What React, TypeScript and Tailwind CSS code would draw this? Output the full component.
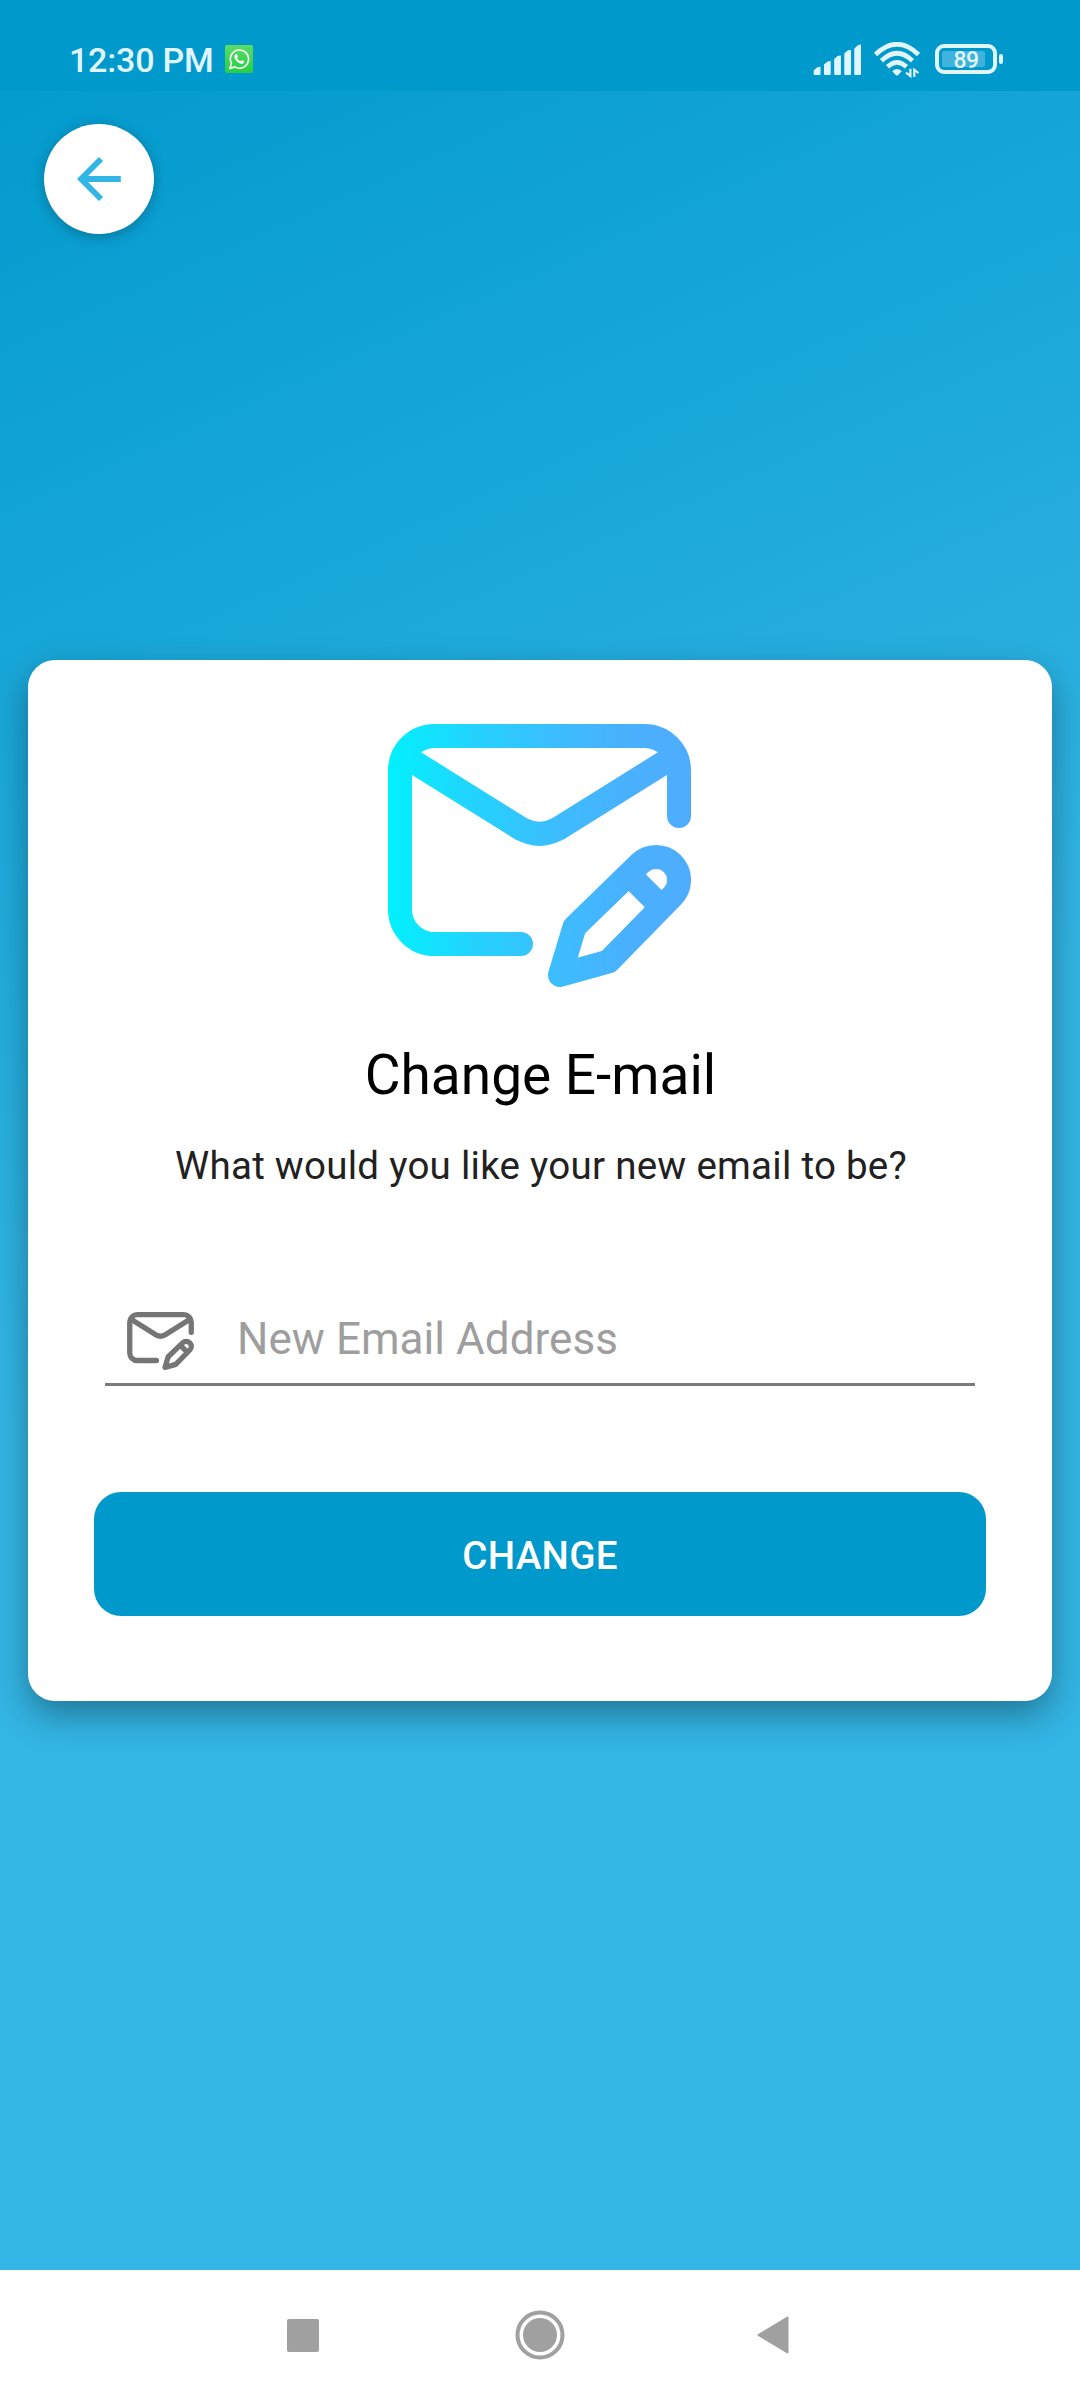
function EnvelopePen({ className, paint }: { className: string; paint: string }) {
  return (
    <svg className={className} viewBox="0 0 303 263" fill="none" stroke={paint} strokeWidth="24" strokeLinecap="round" strokeLinejoin="round">
      <defs>
        <linearGradient id="cyanBlue" gradientUnits="userSpaceOnUse" x1="0" y1="0" x2="303" y2="0">
          <stop offset="0" stopColor="#00f2fe" />
          <stop offset="0.02" stopColor="#03effe" />
          <stop offset="0.29" stopColor="#24d2fe" />
          <stop offset="0.55" stopColor="#3cbdfe" />
          <stop offset="0.8" stopColor="#4ab0fe" />
          <stop offset="1" stopColor="#4facfe" />
        </linearGradient>
      </defs>
      <path d="M133 220H46.500A34.500 34.500 0 0 1 12 185.500V46.500A34.500 34.500 0 0 1 46.500 12H256.500A34.500 34.500 0 0 1 291 46.500V92" />
      <path d="M18 33L133.700 105.200Q151.500 114.500 169.300 105.200L285 33" strokeLinecap="butt" />
      <path d="M172 251L186.500 203L251.700 139.700A23 23 0 0 1 284.300 172.300L220.500 237.500Z" />
      <path d="M244 153.500L270.500 180" strokeLinecap="butt" />
    </svg>
  );
}

function StatusBar() {
  return (
    <header className="flex h-[91px] items-start bg-[#0099cc] pl-[69px] pr-[83px] text-[#e0f5ff]">
      <span className="mt-[40px] w-[144px] whitespace-nowrap text-[34px] font-medium leading-[40px] tracking-[-0.200px]">12:30 PM</span>
      <svg className="ml-[12px] mt-[45px] size-[28px]" viewBox="0 0 28 28" fill="none">
        <defs>
          <linearGradient id="chat" x1="0" y1="0" x2="0" y2="1">
            <stop stopColor="#5bdc68" />
            <stop offset="1" stopColor="#25cf43" />
          </linearGradient>
        </defs>
        <rect width="28" height="28" rx="2" fill="url(#chat)" />
        <path d="M5 23.300L6.400 18.300A9.100 9.100 0 1 1 9.800 21.900Z" stroke="#fff" strokeWidth="1.600" />
        <path d="M10.700 9.200c.5-.5 1.200-.3 1.400.2l.8 1.900c.1.500-.9 1.200-.8 1.600.6 1.500 1.800 2.600 3.300 3.200.5.100 1.100-1.100 1.600-.9l1.900.9c.6.400 0 1.900-.6 2.300-1.200.8-3.200.3-5.100-1-1.800-1.300-3.500-3.400-3.700-5.200-.1-1.100.4-2.300 1.200-3Z" fill="#fff" />
      </svg>
      <div className="ml-auto flex">
        <svg className="mt-[44px] h-[32px] w-[48px]" viewBox="0 0 48 32" fill="currentColor">
          <path d="M.7 26.500L4 23.500Q5 22.700 7.500 22.700V30q0 1-1 1h-4.800q-1 0-1-1ZM11 20.500L14 18Q15 17 17.700 17v13q0 1-1 1H12q-1 0-1-1ZM21.200 15L24 12.500Q25 11.500 27.900 11.500V30q0 1-1 1h-4.700q-1 0-1-1ZM31.300 9.500L34 7Q35 6 38 6v24q0 1-1 1h-4.700q-1 0-1-1ZM41.300 4.500L44 2Q45.500.6 48 .6V30q0 1-1 1h-4.700q-1 0-1-1Z" />
        </svg>
        <svg className="ml-[11px] mt-[42px] h-[36px] w-[48px]" viewBox="0 0 48 36" fill="none" stroke="currentColor" strokeWidth="4.700">
          <path d="M3.500 12.500Q25-7.900 46.500 12.500M9.500 18.800Q25 3.600 40.500 18.800M15.500 24.800Q25 16 34.500 24.800" />
          <path d="M20.200 29.300Q25 24.500 29.800 29.300L26.200 32.900Q25 34 23.800 32.900Z" fill="currentColor" stroke="none" />
          <path d="M38.400 26.800V34L34 30.600M42.300 35V27.800L46.500 31" strokeWidth="2.200" />
        </svg>
        <div className="relative ml-[15px] mt-[44px] flex h-[30px] w-[62px] items-center justify-center rounded-[9px] border-4 border-[#e0f5ff]">
          <span className="absolute left-[3px] top-[3px] h-[16px] w-[43px] rounded-[2px] bg-[#40b3dc]" />
          <span className="relative pt-[3px] text-[23px] font-medium leading-[22px] tracking-[-0.500px]">89</span>
          <span className="absolute -right-[10px] top-[6px] h-[10px] w-[4px] rounded-[2px] bg-[#e0f5ff]" />
        </div>
      </div>
    </header>
  );
}

export default function App() {
  return (
    <div className="flex h-[2400px] w-[1080px] flex-col overflow-hidden bg-[linear-gradient(155.770deg,#0099cc_0%,#33b5e5_50%,#33b5e5_100%)] font-['Roboto',sans-serif]">
      <StatusBar />
      <main className="flex flex-1 flex-col">
        <button aria-label="Back" className="ml-[44px] mt-[33px] flex size-[110px] items-center justify-center rounded-full bg-white shadow-[0_3px_14px_rgba(0,0,0,0.26)]">
          <svg className="size-[44px]" viewBox="0 0 44 44" fill="none" stroke="#33b5e5" strokeWidth="5.800">
            <path d="M43.800 22H5M24 2L4 22L24 42" />
          </svg>
        </button>
        <section className="mx-[28px] mt-[426px] flex h-[1041px] flex-col items-center rounded-[27px] bg-white shadow-[0_14px_34px_rgba(0,0,0,0.34)]">
          <EnvelopePen className="mr-[1px] mt-[64px] h-[263px] w-[303px] shrink-0" paint="url(#cyanBlue)" />
          <h1 className="mt-[56px] pl-[1px] text-[55px] leading-[64px] text-black">Change E-mail</h1>
          <p className="mt-[36px] pl-[2px] text-[38.500px] leading-[45px] tracking-[0.270px] text-[#212121]">What would you like your new email to be?</p>
          <label className="mt-[104px] flex h-[94px] w-[870px] items-center border-b-[3px] border-[#7b7b7b] pl-[22px] pt-[3px]">
            <EnvelopePen className="mt-[4px] h-[58px] w-[67px]" paint="#757575" />
            <input placeholder="New Email Address" className="ml-[43px] w-[650px] bg-transparent text-[44px] leading-[52px] tracking-[0.050px] outline-none placeholder:text-[#9e9e9e]" />
          </label>
          <button className="mt-[106px] h-[124px] w-[892px] rounded-[27px] bg-[#0099cc] pt-[4px] text-[38.500px] font-medium tracking-[0.300px] text-white">CHANGE</button>
        </section>
      </main>
      <nav className="flex h-[130px] items-center bg-white pl-[287px] text-[#a0a0a0]">
        <span className="h-[33px] w-[32px] rounded-[2px] bg-current" />
        <svg className="ml-[196px] size-[50px]" viewBox="0 0 50 50">
          <circle cx="25" cy="25" r="22.500" fill="none" stroke="currentColor" strokeWidth="4" />
          <circle cx="25" cy="25" r="17" fill="currentColor" />
        </svg>
        <svg className="ml-[192px] h-[38px] w-[32px]" viewBox="0 0 32 38">
          <path d="M1.500 19L30.500 1.500V36.500Z" fill="currentColor" stroke="currentColor" strokeWidth="2" strokeLinejoin="round" />
        </svg>
      </nav>
    </div>
  );
}
